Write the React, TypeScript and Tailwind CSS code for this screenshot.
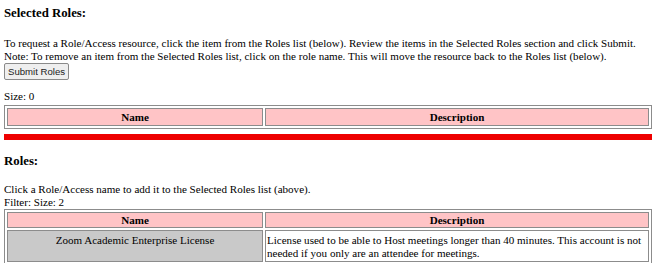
export default function App() {
  return (
    <div className="w-[657px] h-[263px] overflow-hidden bg-white text-black px-[4px] text-[11.05px] leading-[13px] font-['Liberation_Serif','Times_New_Roman',serif]">
      <h3 className="font-bold text-[12.8px] leading-[16px] pt-[5px] mb-[16px]">Selected Roles:</h3>
      <div>To request a Role/Access resource, click the item from the Roles list (below). Review the items in the Selected Roles section and click Submit.</div>
      <div>Note: To remove an item from the Selected Roles list, click on the role name. This will move the resource back to the Roles list (below).</div>
      <button className="h-[17px] px-[3px] text-[9.6px] leading-[15px] border border-[#8a8a8a] rounded-[2px] bg-[#efefef] text-[#222] font-['Liberation_Sans',Arial,sans-serif]">Submit Roles</button>
      <div className="h-[10px]" />
      <div>Size: 0</div>
      <table className="w-[648px] mt-[2px] border border-[#8c8c8c] border-separate border-spacing-[2px]">
        <thead>
          <tr>
            <th className="w-[40%] h-[18px] p-0 bg-[#ffc4c6] border border-[#8c8c8c] font-bold leading-[16px]">Name</th>
            <th className="p-0 bg-[#ffc4c6] border border-[#8c8c8c] font-bold leading-[16px]">Description</th>
          </tr>
        </thead>
      </table>
      <div className="w-[648px] h-[6px] bg-[#ee0000] mt-[5px]" />
      <h3 className="font-bold text-[12.8px] leading-[16px] mt-[13px] mb-[14px]">Roles:</h3>
      <div>Click a Role/Access name to add it to the Selected Roles list (above).</div>
      <div>Filter: Size: 2</div>
      <table className="w-[648px] border border-[#8c8c8c] border-separate border-spacing-[2px]">
        <thead>
          <tr>
            <th className="w-[40%] h-[16px] p-0 bg-[#ffc4c6] border border-[#8c8c8c] font-bold leading-[14px]">Name</th>
            <th className="p-0 bg-[#ffc4c6] border border-[#8c8c8c] font-bold leading-[14px]">Description</th>
          </tr>
        </thead>
        <tbody>
          <tr>
            <td className="align-top text-center bg-[#c9c9c9] border border-[#8c8c8c] px-[1px] pt-[3px] pb-[1px]">Zoom Academic Enterprise License</td>
            <td className="align-top border border-[#8c8c8c] px-[1px] pt-[3px] pb-[1px]">License used to be able to Host meetings longer than 40 minutes. This account is not needed if you only are an attendee for meetings.</td>
          </tr>
        </tbody>
      </table>
    </div>
  );
}
